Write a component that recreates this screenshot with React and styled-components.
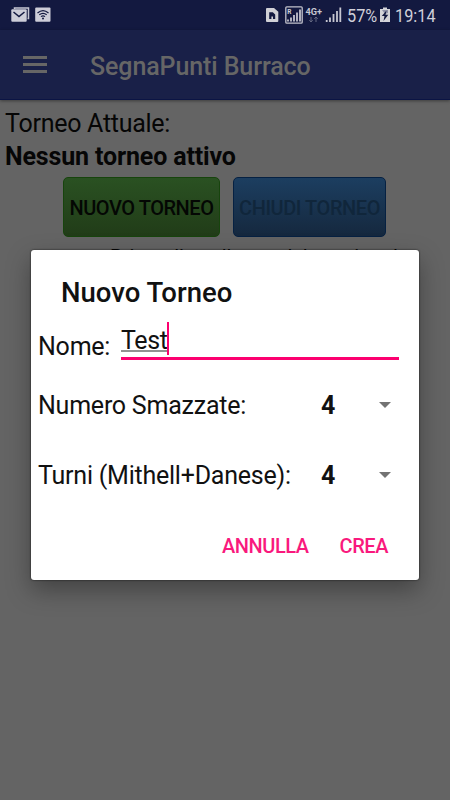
import React from 'react';
import styled, { createGlobalStyle } from 'styled-components';

const App = () => {
  return (
    <Screen>
      <GlobalStyle />
      <StatusBar>
        <StatusGroup>
          <MailIcon />
          <WifiIcon />
        </StatusGroup>
        <StatusGroup>
          <StatusIcons />
          <StatusText $width={28}>57%</StatusText>
          <BatteryIcon />
          <StatusText $width={41}>19:14</StatusText>
        </StatusGroup>
      </StatusBar>
      <AppBar>
        <MenuButton aria-label='Menu'>
          <MenuLine />
          <MenuLine />
          <MenuLine />
        </MenuButton>
        <AppTitle>SegnaPunti Burraco</AppTitle>
      </AppBar>
      <Content>
        <Label>Torneo Attuale:</Label>
        <Current>Nessun torneo attivo</Current>
        <Buttons>
          <ActionButton $width={157} $color='green'>
            Nuovo Torneo
          </ActionButton>
          <ActionButton $width={153} $color='blue' disabled>
            Chiudi Torneo
          </ActionButton>
        </Buttons>
        <Hint>Prima di quella ora del mattino da</Hint>
      </Content>
      <Dialog role='dialog'>
        <DialogTitle>Nuovo Torneo</DialogTitle>
        <NameRow>
          <FieldLabel>Nome:</FieldLabel>
          <NameField>
            <Typed>Test</Typed>
            <Caret />
          </NameField>
        </NameRow>
        <SelectRow>
          <FieldLabel>Numero Smazzate:</FieldLabel>
          <Spinner>
            4 <Arrow />
          </Spinner>
        </SelectRow>
        <SelectRow>
          <FieldLabel>Turni (Mithell+Danese):</FieldLabel>
          <Spinner>
            4 <Arrow />
          </Spinner>
        </SelectRow>
        <DialogActions>
          <TextButton>Annulla</TextButton>
          <TextButton>Crea</TextButton>
        </DialogActions>
      </Dialog>
    </Screen>
  );
};

export default App;

const MailIcon = () => (
  <svg width='19' height='16' viewBox='0 0 19 16'>
    <path d='M3.5 2V1h14v10.5h-1' fill='none' stroke='#c6c6d2' strokeWidth='1.5' />
    <rect x='.3' y='2.3' width='15.4' height='12.4' rx='1' fill='#cdcdd8' />
    <path d='M2.5 5l5.5 4.6L13.5 5' fill='none' stroke='#131940' strokeWidth='1.5' />
  </svg>
);

const WifiIcon = () => (
  <svg width='16' height='16' viewBox='0 0 16 16'>
    <rect x='.2' y='.5' width='15.3' height='14.2' rx='1' fill='#cdcdd8' />
    <g fill='none' stroke='#131940' strokeWidth='1.2'>
      <path d='M2.5 6Q8 1.2 13.5 6' />
      <path d='M4.3 7.8Q8 4.8 11.7 7.8' />
      <path d='M6 9.6Q8 8 10 9.6' />
    </g>
    <circle cx='8' cy='11.4' r='1' fill='#131940' />
  </svg>
);

const StatusIcons = () => (
  <svg width='78' height='20' viewBox='0 0 78 20'>
    <path d='M3 3h7l4.3 3.8V16q0 1-1 1H3q-1 0-1-1V4q0-1 1-1z' fill='#d0d0d6' />
    <path d='M5.2 14V7.3h3.6l2.4 2.3V14H9v-2.6H7.4V14z' fill='#131940' />
    <rect x='21.8' y='1.8' width='16.4' height='16.4' rx='1' fill='none' stroke='#c2c2cc' strokeWidth='1.3' />
    <text x='23.2' y='8.7' fontSize='6.5' fontWeight='700' fill='#d0d0d6'>R</text>
    <path d='M24 16.5v-2M27 16.5v-4M30 16.5v-6.5M33 16.5v-9M36 16.5V4.5' stroke='#c2c2cc' strokeWidth='1.8' />
    <text x='41.5' y='10' fontSize='9' fontWeight='700' fill='#c6c6d0' textLength='16.5' lengthAdjust='spacingAndGlyphs'>4G+</text>
    <path d='M47 12v5m-1.7-1.8L47 17l1.7-1.8M52 17v-5m-1.7 1.8L52 12l1.7 1.8' fill='none' stroke='#656981' />
    <path d='M62.7 17v-2M66 17v-4.5M69.5 17V9M73 17V6M76.3 17V2.5' stroke='#c6c6d0' strokeWidth='1.8' />
  </svg>
);

const BatteryIcon = () => (
  <svg width='10' height='16' viewBox='0 0 10 16'>
    <path d='M3 .5h4V2h3v13H0V2h3z' fill='#d3d3d8' />
    <path d='M2 3h6v3L5 7z' fill='#8e91a8' />
    <path d='M6.5 3.5L1.8 9h2.7l-1 5 4.8-6.2H5.5z' fill='#131940' />
  </svg>
);

const GlobalStyle = createGlobalStyle`
  * {
    box-sizing: border-box;
  }
  body {
    margin: 0;
    font-family: Roboto, 'Liberation Sans', sans-serif;
  }
  button {
    font-family: inherit;
    padding: 0;
  }
`;

const Screen = styled.div`
  position: relative;
  width: 450px;
  height: 800px;
  overflow: hidden;
  background-color: #646464;
`;

const StatusBar = styled.div`
  height: 30px;
  padding: 0 14px 0 11px;
  display: flex;
  align-items: center;
  justify-content: space-between;
  background-color: #131940;
`;
const StatusGroup = styled.div`
  display: flex;
  align-items: center;
  gap: 5px;
`;
const StatusText = styled.span`
  width: ${({ $width }) => $width}px;
  padding-top: 1px;
  font-size: 18.5px;
  white-space: nowrap;
  color: #d0d0d9;
  transform: scaleX(0.88);
  transform-origin: left;
`;

const AppBar = styled.header`
  height: 70px;
  padding-left: 23px;
  display: flex;
  align-items: center;
  background-color: #192048;
  border-bottom: 1px solid #0b1444;
  box-shadow: 0 1px 3px rgba(0, 0, 0, 0.4);
`;
const MenuButton = styled.button`
  width: 24px;
  display: flex;
  flex-direction: column;
  gap: 4px;
  border: none;
  background: none;
`;
const MenuLine = styled.span`
  height: 3px;
  background-color: #666;
`;
const AppTitle = styled.h1`
  margin: 3px 0 0 43px;
  font-size: 25px;
  font-weight: 500;
  letter-spacing: -0.1px;
  color: #666;
`;

const Content = styled.main`
  padding: 7px 5px;
  color: #060606;
`;
const Label = styled.div`
  font-size: 25px;
  line-height: 33px;
  letter-spacing: -0.27px;
`;
const Current = styled.div`
  font-size: 25px;
  line-height: 33px;
  font-weight: 700;
  letter-spacing: -0.15px;
`;
const Buttons = styled.div`
  display: flex;
  justify-content: center;
  gap: 13px;
  margin-top: 4px;
  padding-right: 1px;
`;
const ActionButton = styled.button`
  width: ${({ $width }) => $width}px;
  height: 60px;
  border-radius: 5px;
  border: 1px solid ${({ $color }) => ($color === 'green' ? '#17440d' : '#062142')};
  background: ${({ $color }) =>
    $color === 'green'
      ? 'linear-gradient(#2a5122, #213c18)'
      : 'linear-gradient(#1c3e60, #15283e)'};
  color: ${({ $color }) => ($color === 'green' ? '#040704' : '#10263b')};
  padding-top: 2px;
  font-size: 20px;
  letter-spacing: -0.45px;
  font-weight: 500;
  text-transform: uppercase;
  white-space: nowrap;
`;
const Hint = styled.div`
  margin: 8px 0 0 105px;
  font-size: 20px;
  line-height: 25px;
  white-space: nowrap;
`;

const Dialog = styled.section`
  position: absolute;
  top: 250px;
  left: 31px;
  width: 388px;
  height: 330px;
  padding: 0 7px;
  border-radius: 3px;
  background-color: #fff;
  box-shadow: 0 10px 24px rgba(0, 0, 0, 0.34), 0 0 2px rgba(0, 0, 0, 0.8);
  color: #111;
`;
const DialogTitle = styled.h2`
  height: 70px;
  margin: 0;
  padding: 26px 0 0 23px;
  font-size: 27.5px;
  line-height: 34px;
  font-weight: 500;
`;
const NameRow = styled.div`
  height: 50px;
  display: flex;
  align-items: flex-start;
`;
const FieldLabel = styled.span`
  padding-top: 2px;
  font-size: 25px;
  line-height: 30px;
  letter-spacing: -0.23px;
  white-space: nowrap;
  ${NameRow} & {
    margin-top: 10px;
  }
`;
const NameField = styled.div`
  width: 278px;
  height: 40px;
  margin-left: auto;
  margin-right: 13px;
  display: flex;
  border-bottom: 3px solid #fc006f;
`;
const Typed = styled.span`
  height: 32px;
  border-bottom: 2px solid #919191;
  font-size: 25px;
  line-height: 41px;
  letter-spacing: -0.4px;
`;
const Caret = styled.span`
  width: 2px;
  height: 33px;
  margin-top: 2px;
  background-color: #fc006f;
`;
const SelectRow = styled.div`
  height: 70px;
  display: flex;
  align-items: center;
  justify-content: space-between;
`;
const Spinner = styled.div`
  width: 91px;
  padding: 1px 21px 0 0;
  display: flex;
  align-items: center;
  justify-content: space-between;
  font-size: 25px;
  font-weight: 700;
`;
const Arrow = styled.span`
  margin-top: -2px;
  border: 6.5px solid transparent;
  border-top: 6px solid #737373;
  border-bottom: none;
`;
const DialogActions = styled.div`
  height: 71px;
  padding-right: 24px;
  display: flex;
  align-items: center;
  justify-content: flex-end;
  gap: 31px;
`;
const TextButton = styled.button`
  border: none;
  background: none;
  color: #f9197d;
  font-size: 20px;
  letter-spacing: -0.45px;
  font-weight: 500;
  text-transform: uppercase;
`;
